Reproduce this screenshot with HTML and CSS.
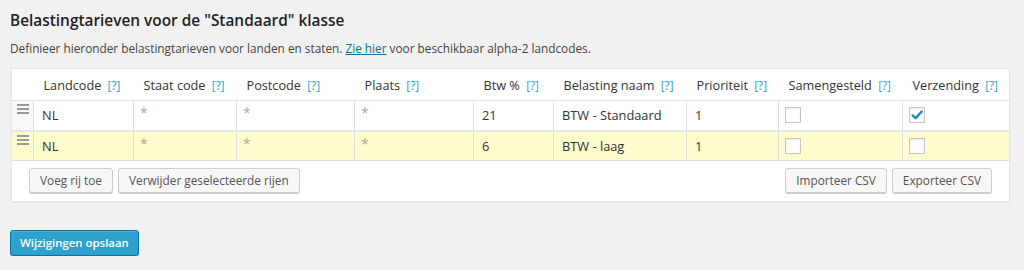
FILE: index.html
```html
<!DOCTYPE html>
<html lang="nl">
<head>
<meta charset="utf-8">
<link rel="stylesheet" href="styles.css">
</head>
<body>
<div class="wrap">
  <h3 class="title">Belastingtarieven voor de "Standaard" klasse</h3>
  <p class="desc">Definieer hieronder belastingtarieven voor landen en staten. <a href="#">Zie hier</a> voor beschikbaar alpha-2 landcodes.</p>
  <table class="rates">
    <colgroup>
      <col class="c-handle"><col class="c-land"><col class="c-staat"><col class="c-post"><col class="c-plaats"><col class="c-btw"><col class="c-naam"><col class="c-prio"><col class="c-samen"><col class="c-verz">
    </colgroup>
    <thead>
      <tr>
        <th></th>
        <th>Landcode <span class="tip">[?]</span></th>
        <th>Staat code <span class="tip">[?]</span></th>
        <th>Postcode <span class="tip">[?]</span></th>
        <th>Plaats <span class="tip">[?]</span></th>
        <th>Btw % <span class="tip">[?]</span></th>
        <th>Belasting naam <span class="tip">[?]</span></th>
        <th>Prioriteit <span class="tip">[?]</span></th>
        <th>Samengesteld <span class="tip">[?]</span></th>
        <th>Verzending <span class="tip">[?]</span></th>
      </tr>
    </thead>
    <tbody>
      <tr>
        <td class="handle"><span class="grip"></span></td>
        <td>NL</td>
        <td class="ph">*</td>
        <td class="ph">*</td>
        <td class="ph">*</td>
        <td>21</td>
        <td>BTW - Standaard</td>
        <td>1</td>
        <td class="cb"><span class="box"></span></td>
        <td class="cb"><span class="box"><svg viewBox="0 0 16 16" width="16" height="16"><path d="M3.6 8.4 L6.6 11.2 L12.6 4.6" fill="none" stroke="#1e8cbe" stroke-width="2.4" stroke-linecap="round" stroke-linejoin="round"/></svg></span></td>
      </tr>
      <tr class="current">
        <td class="handle"><span class="grip"></span></td>
        <td>NL</td>
        <td class="ph">*</td>
        <td class="ph">*</td>
        <td class="ph">*</td>
        <td>6</td>
        <td>BTW - laag</td>
        <td>1</td>
        <td class="cb"><span class="box"></span></td>
        <td class="cb"><span class="box"></span></td>
      </tr>
    </tbody>
    <tfoot>
      <tr>
        <th colspan="10">
          <div class="actions">
            <div class="group">
              <button class="btn">Voeg rij toe</button>
              <button class="btn">Verwijder geselecteerde rijen</button>
            </div>
            <div class="group">
              <button class="btn">Importeer CSV</button>
              <button class="btn">Exporteer CSV</button>
            </div>
          </div>
        </th>
      </tr>
    </tfoot>
  </table>
  <div class="submit">
    <button class="btn-primary">Wijzigingen opslaan</button>
  </div>
</div>
</body>
</html>
```
FILE: styles.css
```css
html, body {
  margin: 0;
  padding: 0;
  background: #f1f1f1;
}
body {
  font-family: "Open Sans", "Liberation Sans", sans-serif;
  font-size: 13px;
  color: #444;
}
.wrap {
  padding: 11px 15px 0 10px;
}
.title {
  margin: 0;
  font-size: 15.4px;
  font-weight: 600;
  color: #222;
  line-height: 20px;
}
.desc {
  margin: 8px 0 0;
  font-size: 11.8px;
  line-height: 18px;
  color: #444;
}
.desc a {
  color: #0074a2;
  text-decoration: underline;
}
.rates {
  margin-top: 11px;
  margin-left: 1px;
  width: 998px;
  border-collapse: collapse;
  table-layout: fixed;
  background: #fff;
  border: 1px solid #e5e5e5;
  box-shadow: 0 1px 1px rgba(0,0,0,0.04);
}
.c-handle { width: 22px; }
.c-land { width: 100px; }
.c-staat { width: 103px; }
.c-post { width: 118px; }
.c-plaats { width: 119px; }
.c-btw { width: 80px; }
.c-naam { width: 133px; }
.c-prio { width: 92px; }
.c-samen { width: 124px; }
.c-verz { width: 107px; }
.rates thead tr { height: 32px; }
.rates thead th {
  padding: 0 0 0 10px;
  text-align: left;
  font-weight: 400;
  font-size: 12.7px;
  line-height: 18px;
  color: #333;
  border-bottom: 1px solid #e1e1e1;
  white-space: nowrap;
}
.tip {
  color: #2ea2cc;
  font-size: 11.8px;
  margin-left: 3px;
}
.rates tbody tr { height: 30px; }
.rates tbody td {
  padding: 0 8px;
  border: 1px solid #dfdfdf;
  border-top: 0;
  font-size: 12.8px;
  line-height: 18px;
  color: #333;
  vertical-align: middle;
  background: #fff;
}
.rates tbody tr + tr td {
  border-top: 2px solid #e6e6e6;
}
.rates tbody tr.current td {
  background: #fefbcc;
}
.rates tbody td:first-child { border-left: 0; }
.rates tbody td:last-child { border-right: 0; }
.rates tbody td.ph {
  color: #aaa;
  padding: 4px 0 0 6px;
  vertical-align: top;
  font-size: 14px;
  line-height: 16px;
}
.rates tbody td.handle {
  padding: 0;
  vertical-align: top;
  background: #f9f9f9;
}
.rates tbody tr.current td.handle { background: #fefbcc; }
.grip {
  display: block;
  width: 12px;
  height: 2px;
  margin: 3px 0 0 5px;
  background: #999;
  box-shadow: 0 4px 0 #999, 0 8px 0 #999;
}
.rates tbody td.cb {
  padding: 0 0 0 6px;
}
.box {
  display: block;
  width: 14px;
  height: 14px;
  border: 1px solid #c6c6c6;
  background: #fff;
  box-shadow: inset 0 1px 2px rgba(0,0,0,0.08);
  position: relative;
}
.box svg {
  position: absolute;
  left: -1px;
  top: -1px;
}
.rates tfoot th {
  padding: 7px 17px 8px 17px;
  border-top: 1px solid #e6e6e6;
  font-weight: 400;
}
.actions {
  display: flex;
  justify-content: space-between;
}
.group {
  display: flex;
  gap: 5px;
}
.btn {
  font-family: "Open Sans", "Liberation Sans", sans-serif;
  font-size: 11.8px;
  height: 25px;
  line-height: 23px;
  padding: 0 10px;
  background: #f7f7f7;
  border: 1px solid #cccccc;
  border-radius: 3px;
  box-shadow: 0 1px 0 #cccccc;
  color: #555;
  cursor: pointer;
}
.submit {
  margin-top: 28px;
}
.btn-primary {
  font-family: "Open Sans", "Liberation Sans", sans-serif;
  font-size: 11.4px;
  font-weight: 600;
  height: 26px;
  line-height: 24px;
  padding: 0 9px;
  background: #2ea2cc;
  border: 1px solid #0074a2;
  border-radius: 3px;
  color: #fff;
  box-shadow: inset 0 1px 0 rgba(120,200,230,0.5), 0 1px 0 rgba(0,0,0,0.15);
  cursor: pointer;
}
```
